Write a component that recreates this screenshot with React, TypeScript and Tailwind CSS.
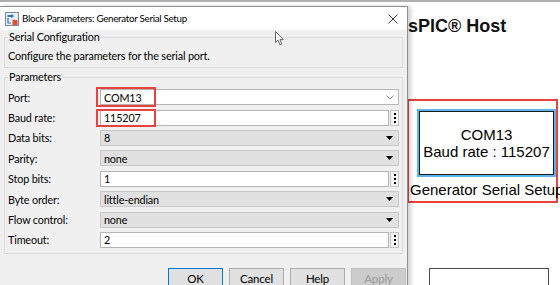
import React from "react";

const ui = { fontFamily: 'Lato, "Noto Sans", sans-serif' };
const arial = { fontFamily: '"Liberation Sans", Arial, sans-serif' };

function Dots() {
  return (
    <div className="ml-[1px] w-[9px] h-[16px] border border-[#c4c4c4] bg-[#f4f4f4] flex flex-col items-center justify-center gap-[2px]">
      <span className="w-[2px] h-[2px] bg-black" />
      <span className="w-[2px] h-[2px] bg-black" />
      <span className="w-[2px] h-[2px] bg-black" />
    </div>
  );
}

function Edit({ value, dots }: { value: string; dots?: boolean }) {
  return (
    <div className="flex items-center">
      <div className="flex-1 h-[16px] bg-white border border-[#b4b4b4] pl-[3px] flex items-center">{value}</div>
      {dots && <Dots />}
    </div>
  );
}

function Popup({ value }: { value: string }) {
  return (
    <div className="h-[16px] bg-[#e1e1e1] border border-[#c8c8c8] pl-[3px] pr-[5px] flex items-center justify-between">
      <span>{value}</span>
      <svg width="7" height="4" viewBox="0 0 7 4">
        <path d="M0 0 L7 0 L3.5 4 Z" fill="#000" />
      </svg>
    </div>
  );
}

function Combo({ value }: { value: string }) {
  return (
    <div className="h-[16px] bg-white border border-[#b4b4b4] pl-[3px] pr-[4px] flex items-center justify-between">
      <span>{value}</span>
      <svg width="8" height="5" viewBox="0 0 8 5">
        <path d="M0.5 0.5 L4 4 L7.5 0.5" fill="none" stroke="#8a8a8a" strokeWidth="1" />
      </svg>
    </div>
  );
}

const rows: { label: string; field: React.ReactNode }[] = [
  { label: "Port:", field: <Combo value="COM13" /> },
  { label: "Baud rate:", field: <Edit value="115207" dots /> },
  { label: "Data bits:", field: <Popup value="8" /> },
  { label: "Parity:", field: <Popup value="none" /> },
  { label: "Stop bits:", field: <Edit value="1" dots /> },
  { label: "Byte order:", field: <Popup value="little-endian" /> },
  { label: "Flow control:", field: <Popup value="none" /> },
  { label: "Timeout:", field: <Edit value="2" dots /> },
];

function TitleIcon() {
  return (
    <svg width="14" height="14" viewBox="0 0 14 14">
      <rect x="0.5" y="0.5" width="13" height="13" fill="#e8eef5" stroke="#7d8a99" />
      <path d="M2.5 3 L6.5 3 L6.5 1.8 L9 4 L6.5 6.2 L6.5 5 L2.5 5 Z" fill="#2f78c4" />
      <path d="M3 6 L3 11 L6 11" fill="none" stroke="#2f78c4" strokeWidth="1.2" />
      <rect x="7.5" y="8" width="5" height="5" fill="#e0502a" />
    </svg>
  );
}

function Cursor() {
  return (
    <svg className="absolute z-20 left-[275px] top-[31px]" width="10" height="15" viewBox="0 0 10 15">
      <path d="M0.5 0.5 L0.5 11.5 L3 9.2 L5 13.8 L6.8 13 L4.9 8.6 L8.3 8.6 Z" fill="#fff" stroke="#555" strokeWidth="0.9" />
    </svg>
  );
}

function Button({ label, kind }: { label: string; kind?: "default" | "disabled" }) {
  const cls =
    kind === "default"
      ? "border-[#0078d7] bg-[#e1e1e1] text-black"
      : kind === "disabled"
      ? "border-[#bfbfbf] bg-[#cccccc] text-[#9a9a9a]"
      : "border-[#adadad] bg-[#e1e1e1] text-black";
  return (
    <div className={`w-[55px] h-[21px] border flex items-center justify-center text-[11.5px] ${cls}`}>{label}</div>
  );
}

export default function App() {
  return (
    <div className="relative w-[560px] h-[285px] overflow-hidden bg-white">
      {/* model canvas behind the dialog */}
      <div className="absolute inset-0" style={arial}>
        <div className="h-[2px] bg-[#b0b0b0]" />
        <div className="absolute left-[408px] top-[17px] text-[18px] leading-[18px] font-bold text-[#111]">sPIC® Host</div>
        <div className="absolute left-[407px] top-[99px] w-[151px] h-[104px] border-2 border-[#e8413e]" />
        <div className="absolute left-[417px] top-[109px] w-[139px] h-[68px] border-2 border-[#5fb3ef]">
          <div className="w-full h-full border border-[#1a1a1a] flex flex-col items-center justify-center text-[15px] leading-[17px] text-black">
            <span>COM13</span>
            <span>Baud rate : 115207</span>
          </div>
        </div>
        <div className="absolute left-[410px] top-[181px] text-[15px] leading-[18px] text-black whitespace-nowrap">Generator Serial Setup</div>
        <div className="absolute left-[429px] top-[268px] w-[120px] h-[30px] border-[1.5px] border-[#4a4a4a] bg-white" />
      </div>

      {/* dialog window */}
      <div className="relative z-10 mt-[6px] w-[408px] h-[290px] bg-[#f0f0f0] border-r border-t border-[#8f8f8f] shadow-[3px_0_4px_rgba(0,0,0,0.18)] text-[10.8px] tracking-[-0.15px] leading-[13px] text-black" style={ui}>
        <div className="h-[23px] bg-white flex items-center pl-[5px] pr-[9px] gap-[3px]">
          <TitleIcon />
          <span className="flex-1 text-[9.8px] tracking-[-0.3px]">Block Parameters: Generator Serial Setup</span>
          <svg width="10" height="10" viewBox="0 0 10 10">
            <path d="M0.5 0.5 L9.5 9.5 M9.5 0.5 L0.5 9.5" stroke="#333" strokeWidth="1" />
          </svg>
        </div>

        <fieldset className="mx-[4px] border border-[#dcdcdc] px-[3px] pb-[5px]">
          <legend className="leading-[14px] px-[1px]">Serial Configuration</legend>
          <div className="pt-[5px]">Configure the parameters for the serial port.</div>
        </fieldset>

        <fieldset className="mx-[4px] mt-[2px] border border-[#dcdcdc] px-[3px] pb-[3px]">
          <legend className="leading-[14px] px-[1px]">Parameters</legend>
          <div className="grid grid-cols-[92px_1fr] auto-rows-[20.4px] items-center pt-[3px]">
            {rows.map((r) => (
              <React.Fragment key={r.label}>
                <span>{r.label}</span>
                {r.field}
              </React.Fragment>
            ))}
          </div>
        </fieldset>

        <div className="flex justify-end gap-[6px] pr-[1px] mt-[14px]">
          <Button label="OK" kind="default" />
          <Button label="Cancel" />
          <Button label="Help" />
          <Button label="Apply" kind="disabled" />
        </div>

        {/* annotation highlights */}
        <div className="absolute left-[96px] top-[80px] w-[60px] h-[20px] border-2 border-[#e8413e]" />
        <div className="absolute left-[96px] top-[102px] w-[60px] h-[18px] border-2 border-[#e8413e]" />
      </div>

      <Cursor />
    </div>
  );
}
